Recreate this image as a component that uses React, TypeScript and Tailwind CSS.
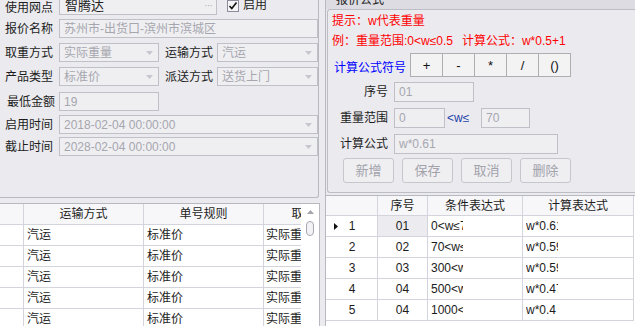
import React from 'react'

const label = 'text-[12px] leading-none text-[#1c1c1c] whitespace-nowrap'
const box = 'border border-[#c0c0c8] bg-[#efeff2] text-[12px] leading-none text-[#a6a6ae] flex items-center pl-[4px] pr-[5px] overflow-hidden whitespace-nowrap'

function Caret() {
  return (
    <svg width="7" height="4" viewBox="0 0 7 4" className="ml-auto shrink-0">
      <path d="M0 0h7L3.5 4z" fill="#c6c6ce" />
    </svg>
  )
}

function Field({ value, w, select, h = 'h-[19px]' }: { value: string; w: string; select?: boolean; h?: string }) {
  return (
    <div className={`${box} ${w} ${h}`}>
      <span>{value}</span>
      {select && <Caret />}
    </div>
  )
}

const leftRows = [0, 1, 2, 3, 4]
const rightRows = [
  { no: '1', seq: '01', cond: '0<w≤70', calc: 'w*0.61' },
  { no: '2', seq: '02', cond: '70<w≤300', calc: 'w*0.59' },
  { no: '3', seq: '03', cond: '300<w≤500', calc: 'w*0.59' },
  { no: '4', seq: '04', cond: '500<w≤1000', calc: 'w*0.47' },
  { no: '5', seq: '04', cond: '1000<w', calc: 'w*0.4' },
]

export default function App() {
  return (
    <div className="w-[635px] h-[326px] overflow-hidden bg-[#ebebef] flex font-['Liberation_Sans','Noto_Sans_CJK_SC',sans-serif]">
      {/* 左侧 */}
      <div className="w-[320px] flex flex-col shrink-0">
        <div className="w-[319px] h-[198px] shrink-0 border-r border-b border-[#b8b8c0] rounded-br-[3px] overflow-hidden">
          <div className="flex flex-col -mt-[5px] pl-[5px]">
            <div className="flex items-center h-[20px]">
              <span className={`${label} w-[54px] pt-[5px]`}>使用网点</span>
              <div className="w-[158px] h-[20px] border border-[#c0c0c8] bg-[#efeff2] flex items-center pl-[5px] pr-[4px]">
                <span className="text-[13px] leading-none text-[#222]">智腾达</span>
                <span className="ml-auto text-[11px] leading-none text-[#b4b4bc] tracking-[-1px]">···</span>
              </div>
              <svg width="12" height="12" viewBox="0 0 12 12" className="ml-[10px] mt-[1px] shrink-0">
                <rect x="0.5" y="0.5" width="11" height="11" fill="#f4f4f7" stroke="#8c8c9c" />
                <path d="M2.5 6l2.3 2.5L9.5 2.5" fill="none" stroke="#111" strokeWidth="1.6" />
              </svg>
              <span className={`${label} ml-[4px] text-[12px]`}>启用</span>
            </div>

            <div className="flex items-center h-[19px] mt-[4px]">
              <span className={`${label} w-[54px]`}>报价名称</span>
              <Field value="苏州市-出货口-滨州市滨城区" w="w-[259px]" />
            </div>

            <div className="flex items-center h-[19px] mt-[5px]">
              <span className={`${label} w-[54px]`}>取重方式</span>
              <Field value="实际重量" w="w-[100px]" select />
              <span className={`${label} ml-[6px] w-[52px]`}>运输方式</span>
              <Field value="汽运" w="w-[101px]" select />
            </div>

            <div className="flex items-center h-[19px] mt-[5px]">
              <span className={`${label} w-[54px]`}>产品类型</span>
              <Field value="标准价" w="w-[100px]" select />
              <span className={`${label} ml-[6px] w-[52px]`}>派送方式</span>
              <Field value="送货上门" w="w-[101px]" select />
            </div>

            <div className="flex items-center h-[19px] mt-[6px]">
              <span className={`${label} w-[54px] pl-[2px]`}>最低金额</span>
              <Field value="19" w="w-[100px]" />
            </div>

            <div className="flex items-center h-[19px] mt-[4px]">
              <span className={`${label} w-[54px]`}>启用时间</span>
              <Field value="2018-02-04 00:00:00" w="w-[259px]" select />
            </div>

            <div className="flex items-center h-[19px] mt-[3px]">
              <span className={`${label} w-[54px]`}>截止时间</span>
              <Field value="2028-02-04 00:00:00" w="w-[259px]" select />
            </div>
          </div>
        </div>

        <div className="mt-[5px] flex-1 border-t border-r border-[#b8b8c0] bg-white flex overflow-hidden">
          <div className="w-[301px] overflow-hidden">
            <div className="w-[368px] text-[12px] leading-none text-[#1c1c1c]">
              <div className="flex h-[21px] border-b border-[#d4d4dc] bg-[#f7f7f9]">
                <div className="w-[24px] border-r border-[#d4d4dc]" />
                <div className="w-[120px] border-r border-[#d4d4dc] flex items-center justify-center">运输方式</div>
                <div className="w-[120px] border-r border-[#d4d4dc] flex items-center justify-center">单号规则</div>
                <div className="w-[104px] border-r border-[#d4d4dc] flex items-center justify-center">取重方式</div>
              </div>
              {leftRows.map((i) => (
                <div key={i} className="flex h-[21px] border-b border-[#d4d4dc]">
                  <div className="w-[24px] border-r border-[#d4d4dc]" />
                  <div className="w-[120px] border-r border-[#d4d4dc] flex items-center pl-[3px]">汽运</div>
                  <div className="w-[120px] border-r border-[#d4d4dc] flex items-center pl-[3px]">标准价</div>
                  <div className="w-[104px] border-r border-[#d4d4dc] flex items-center pl-[2px]">实际重量</div>
                </div>
              ))}
            </div>
          </div>
          <div className="w-[18px] bg-white flex flex-col items-center pt-[6px]">
            <svg width="7" height="4" viewBox="0 0 7 4">
              <path d="M3.5 0L7 4H0z" fill="#a4a4ac" />
            </svg>
            <div className="mt-[7px] w-[8px] h-[15px] rounded-full border border-[#a8a8b2] bg-[#f3f3f6]" />
          </div>
        </div>
      </div>

      {/* 右侧 */}
      <div className="ml-[5px] flex-1 border-l border-[#b8b8c0] flex flex-col">
        <div className="h-[195px] shrink-0 flex flex-col">
          <div className="h-[9px] bg-[#dcdce2] overflow-hidden pl-[10px]">
            <div className="-mt-[6px] text-[12px] leading-[13px] text-[#222]">报价公式</div>
          </div>
          <div className="ml-[1px] h-[184px] border-l border-t border-b border-[#bdbdc5] rounded-tl-[3px] rounded-bl-[3px] flex flex-col">
            <div className="mt-[4px] pl-[4px] h-[14px] flex items-center text-[12px] leading-none text-[#ff0000]">提示：w代表重量</div>
            <div className="mt-[6px] pl-[4px] h-[14px] flex items-center text-[12px] leading-none text-[#ff0000] whitespace-nowrap">
              <span>例：重量范围:0&lt;w≤0.5</span>
              <span className="ml-[9px]">计算公式：w*0.5+1</span>
            </div>
            <div className="mt-[5px] flex items-center h-[24px]">
              <span className="ml-[6px] w-[76px] pt-[5px] text-[12px] leading-none text-[#0000ff] whitespace-nowrap">计算公式符号</span>
              <div className="flex h-[24px] border-l border-[#adadb2]">
                {['+', '-', '*', '/', '()'].map((s) => (
                  <div key={s} className="w-[32px] h-[24px] border-y border-r border-[#adadb2] bg-[#f3f3f4] flex items-center justify-center text-[13px] leading-none text-[#111]">
                    {s}
                  </div>
                ))}
              </div>
            </div>

            <div className="mt-[5px] flex items-center h-[20px]">
              <span className={`${label} w-[60px] text-right`}>序号</span>
              <Field value="01" w="ml-[6px] w-[80px]" h="h-[20px]" />
            </div>
            <div className="mt-[6px] flex items-center h-[20px]">
              <span className={`${label} w-[60px] text-right`}>重量范围</span>
              <Field value="0" w="ml-[6px] w-[51px]" h="h-[20px]" />
              <span className="ml-[2px] w-[34px] text-[12px] leading-none text-[#2342a8]">&lt;w≤</span>
              <Field value="70" w="w-[49px]" h="h-[20px]" />
            </div>
            <div className="mt-[6px] flex items-center h-[20px]">
              <span className={`${label} w-[60px] text-right`}>计算公式</span>
              <Field value="w*0.61" w="ml-[6px] w-[164px]" h="h-[20px]" />
            </div>
            <div className="mt-[4px] flex gap-[8px] pl-[15px]">
              {['新增', '保存', '取消', '删除'].map((t) => (
                <div key={t} className="w-[51px] h-[25px] rounded-[3px] border border-[#c6c6cd] bg-[#efeff2] flex items-center justify-center text-[13px] leading-none text-[#a2a2aa]">
                  {t}
                </div>
              ))}
            </div>
          </div>
        </div>

        <div className="flex-1 border-t border-[#b8b8c0] bg-white overflow-hidden text-[12px] leading-none text-[#1c1c1c]">
          <div className="flex h-[20px] border-b border-[#d4d4dc] bg-[#f7f7f9] w-[308px]">
            <div className="w-[52px] border-r border-[#d4d4dc]" />
            <div className="w-[50px] border-r border-[#d4d4dc] flex items-center justify-center">序号</div>
            <div className="w-[95px] border-r border-[#d4d4dc] flex items-center justify-center">条件表达式</div>
            <div className="w-[111px] border-r border-[#d4d4dc] flex items-center justify-center">计算表达式</div>
          </div>
          {rightRows.map((r, i) => (
            <div key={r.no} className="flex h-[21px] border-b border-[#d4d4dc] w-[308px]">
              <div className="w-[52px] border-r border-[#d4d4dc] flex items-center relative justify-center">
                {i === 0 && (
                  <svg width="4" height="7" viewBox="0 0 4 7" className="absolute left-[8px] top-[7px]">
                    <path d="M0 0l4 3.5L0 7z" fill="#111" />
                  </svg>
                )}
                <span className="pl-[1px]">{r.no}</span>
              </div>
              <div className={`w-[50px] border-r border-[#d4d4dc] flex items-center justify-center ${i === 0 ? 'bg-[#ececf0]' : ''}`}>{r.seq}</div>
              <div className="w-[95px] border-r border-[#d4d4dc] flex items-center pl-[3px]">
                <span className="w-[32px] overflow-hidden whitespace-nowrap">{r.cond}</span>
              </div>
              <div className="w-[111px] border-r border-[#d4d4dc] flex items-center pl-[3px]">
                <span className="w-[32px] overflow-hidden whitespace-nowrap">{r.calc}</span>
              </div>
            </div>
          ))}
        </div>
      </div>
    </div>
  )
}
